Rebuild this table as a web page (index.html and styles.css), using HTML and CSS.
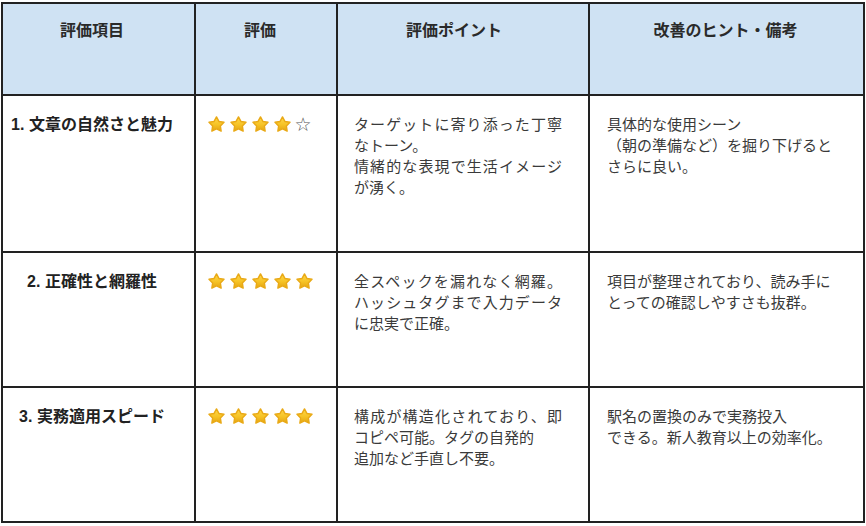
FILE: index.html
```html
<!DOCTYPE html>
<html lang="ja">
<head>
<meta charset="utf-8">
<title>評価表</title>
<link rel="stylesheet" href="styles.css">
</head>
<body>
<svg class="defs" width="0" height="0" aria-hidden="true">
  <defs>
    <linearGradient id="gold" x1="0" y1="0" x2="0" y2="1">
      <stop offset="0" stop-color="#ffd84a"/>
      <stop offset="0.55" stop-color="#f6c325"/>
      <stop offset="1" stop-color="#e3a312"/>
    </linearGradient>
    <symbol id="star" viewBox="1.3 1.4 21.4 20.3">
      <path d="M12 2.5L15.06 8.29 21.51 9.41 16.95 14.11 17.88 20.59 12 17.7 6.12 20.59 7.05 14.11 2.49 9.41 8.94 8.29Z" fill="url(#gold)" stroke="#e9a916" stroke-width="1.8" stroke-linejoin="round"/>
    </symbol>
  </defs>
</svg>

<div class="sheet">
  <div class="cell head col1">評価項目</div>
  <div class="cell head col2">評価</div>
  <div class="cell head col3">評価ポイント</div>
  <div class="cell head col4">改善のヒント・備考</div>

  <div class="cell label">1. 文章の自然さと魅力</div>
  <div class="cell stars">
    <svg class="star"><use href="#star"/></svg>
    <svg class="star"><use href="#star"/></svg>
    <svg class="star"><use href="#star"/></svg>
    <svg class="star"><use href="#star"/></svg>
    <span class="empty">☆</span>
  </div>
  <div class="cell point">ターゲットに寄り添った丁寧なトーン。<br>情緒的な表現で生活イメージが湧く。</div>
  <div class="cell hint">具体的な使用シーン<br>（朝の準備など）を掘り下げるとさらに良い。</div>

  <div class="cell label">2. 正確性と網羅性</div>
  <div class="cell stars">
    <svg class="star"><use href="#star"/></svg>
    <svg class="star"><use href="#star"/></svg>
    <svg class="star"><use href="#star"/></svg>
    <svg class="star"><use href="#star"/></svg>
    <svg class="star"><use href="#star"/></svg>
  </div>
  <div class="cell point">全スペックを漏れなく網羅。ハッシュタグまで入力データに忠実で正確。</div>
  <div class="cell hint">項目が整理されており、読み手にとっての確認しやすさも抜群。</div>

  <div class="cell label">3. 実務適用スピード</div>
  <div class="cell stars">
    <svg class="star"><use href="#star"/></svg>
    <svg class="star"><use href="#star"/></svg>
    <svg class="star"><use href="#star"/></svg>
    <svg class="star"><use href="#star"/></svg>
    <svg class="star"><use href="#star"/></svg>
  </div>
  <div class="cell point">構成が構造化されており、即コピペ可能。タグの自発的<br>追加など手直し不要。</div>
  <div class="cell hint">駅名の置換のみで実務投入<br>できる。新人教育以上の効率化。</div>
</div>
</body>
</html>
```

FILE: styles.css
```css
* { box-sizing: border-box; }

html, body {
  margin: 0;
  padding: 0;
  background: #ffffff;
}

body {
  font-family: "Liberation Sans", "Noto Sans CJK JP", sans-serif;
  color: #3a3a3a;
}

.defs {
  position: absolute;
  width: 0;
  height: 0;
  overflow: hidden;
}

.sheet {
  display: grid;
  grid-template-columns: 193px 142px 252px 275px;
  grid-template-rows: 92px 157px 135px 135px;
  width: max-content;
  margin: 2px 0 0 1px;
  border-left: 2px solid #222;
  border-top: 2px solid #222;
}

.cell {
  border-right: 2px solid #222;
  border-bottom: 2px solid #222;
  font-size: 15px;
  line-height: 21px;
}

.head {
  background: #cfe2f3;
  font-weight: 700;
  font-size: 16px;
  color: #2a2a2a;
  text-align: center;
  padding-top: 16px;
}

.head.col1 { padding-left: 2px; padding-right: 15px; }
.head.col2 { padding-left: 2px; padding-right: 14px; }
.head.col3 { padding-left: 2px; padding-right: 20px; }
.head.col4 { padding-left: 2px; padding-right: 4px; }

.label {
  font-weight: 700;
  font-size: 16px;
  color: #222;
  text-align: center;
  padding: 18px 15px 0 2px;
  white-space: nowrap;
}

.stars {
  display: flex;
  justify-content: center;
  align-items: flex-start;
  gap: 5px;
  padding: 20px 14px 0 2px;
}

.star {
  width: 17px;
  height: 16px;
  flex: none;
}

.empty {
  font-family: "DejaVu Sans", sans-serif;
  font-size: 19px;
  line-height: 16px;
  color: #555;
  margin-left: -2px;
}

.point {
  padding: 18px 26px 0 16px;
  text-align: justify;
}

.hint {
  padding: 18px 24px 0 17px;
  text-align: left;
}
```
